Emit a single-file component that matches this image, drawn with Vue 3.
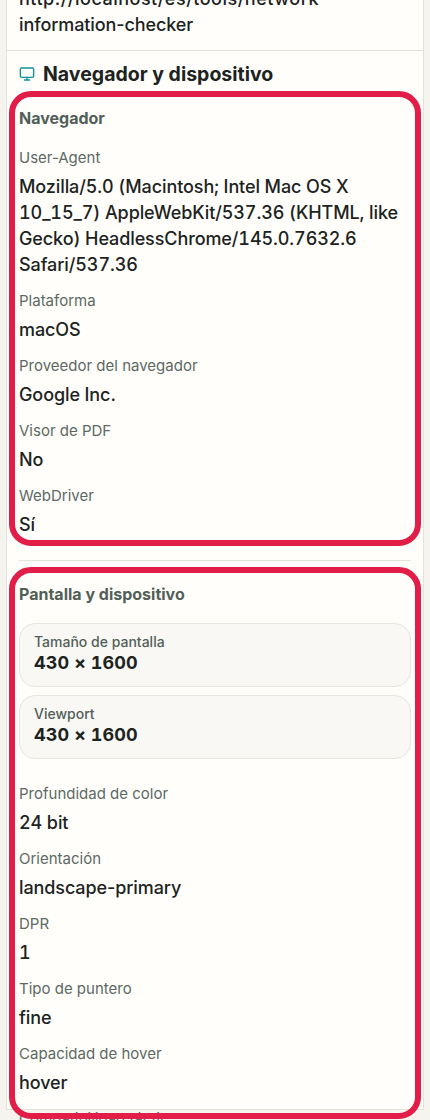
<script setup>
const browserRows = [
  { label: 'User-Agent', value: 'Mozilla/5.0 (Macintosh; Intel Mac OS X 10_15_7) AppleWebKit/537.36 (KHTML, like Gecko) HeadlessChrome/145.0.7632.6 Safari/537.36', numeric: true },
  { label: 'Plataforma', value: 'macOS' },
  { label: 'Proveedor del navegador', value: 'Google Inc.' },
  { label: 'Visor de PDF', value: 'No' },
  { label: 'WebDriver', value: 'Sí' },
]

const screenStats = [
  { label: 'Tamaño de pantalla', value: '430 × 1600' },
  { label: 'Viewport', value: '430 × 1600' },
]

const deviceRows = [
  { label: 'Profundidad de color', value: '24 bit', numeric: true },
  { label: 'Orientación', value: 'landscape-primary' },
  { label: 'DPR', value: '1', numeric: true },
  { label: 'Tipo de puntero', value: 'fine' },
  { label: 'Capacidad de hover', value: 'hover' },
  { label: 'Compatibilidad táctil', value: 'No' },
]
</script>

<template>
  <div class="page">
    <main class="card">
      <div class="url-block">
        <p class="value url"><span class="url-path">http://localhost/es/tools/network-</span>information-checker</p>
      </div>

      <section class="panel">
        <h2 class="panel-title">
          <svg class="panel-icon" viewBox="0 0 24 24" fill="none" stroke="currentColor" stroke-width="2" stroke-linecap="round" stroke-linejoin="round">
            <rect x="2" y="3" width="20" height="14" rx="2" />
            <path d="M8 21h8M12 17v4" />
          </svg>
          Navegador y dispositivo
        </h2>

        <div class="group browser-group">
          <h3 class="group-title">Navegador</h3>
          <div v-for="row in browserRows" :key="row.label" class="row">
            <div class="label">{{ row.label }}</div>
            <div class="value" :class="{ numeric: row.numeric }">{{ row.value }}</div>
          </div>
        </div>

        <hr class="divider">

        <div class="group device-group">
          <h3 class="group-title">Pantalla y dispositivo</h3>
          <div class="stats">
            <div v-for="stat in screenStats" :key="stat.label" class="stat">
              <div class="stat-label">{{ stat.label }}</div>
              <div class="stat-value">{{ stat.value }}</div>
            </div>
          </div>
          <div v-for="row in deviceRows" :key="row.label" class="row">
            <div class="label">{{ row.label }}</div>
            <div class="value" :class="{ numeric: row.numeric }">{{ row.value }}</div>
          </div>
        </div>
      </section>
    </main>
  </div>
</template>

<style>
html,
body {
  height: 1120px;
  overflow: hidden;
  background: #f5f4ef;
}
</style>

<style scoped>
.page {
  height: 1120px;
  overflow: hidden;
  padding: 0 6px;
  box-sizing: border-box;
  font-family: Inter, "Liberation Sans", sans-serif;
}

.card {
  margin-top: -14px;
  background: #fffefb;
  border: 1px solid #e4e3da;
  border-top: 0;
}

.url-block {
  padding: 0 12px 12px;
  border-bottom: 1px solid #e4e3da;
}

.url {
  letter-spacing: 0;
}

.url-path {
  letter-spacing: 0.5px;
}

.panel {
  padding: 11px 12px 0;
}

.panel-title {
  display: flex;
  align-items: center;
  gap: 8px;
  margin: 0 0 15px;
  font-size: 19.5px;
  line-height: 24px;
  font-weight: 700;
  color: #1c2321;
}

.panel-icon {
  width: 16px;
  height: 16px;
  color: #0f949b;
  flex-shrink: 0;
}

.group {
  box-sizing: border-box;
  padding-top: 6px;
  border-radius: 12px;
  outline: 6px solid #e11d48;
  outline-offset: 4px;
}

.browser-group {
  height: 435px;
}

.device-group {
  height: 532px;
}

.group-title {
  margin: 0 0 18px;
  font-size: 16px;
  line-height: 22px;
  font-weight: 700;
  color: #525f58;
}

.row {
  margin-bottom: 12px;
}

.label {
  margin-bottom: 6px;
  font-size: 15px;
  line-height: 21px;
  color: #5d6963;
}

.value {
  margin: 0;
  font-size: 18px;
  line-height: 26px;
  font-weight: 500;
  letter-spacing: -0.1px;
  color: #1c2321;
}

.numeric {
  font-variant-numeric: tabular-nums;
}

.divider {
  height: 1px;
  margin: 24px 0 16px;
  border: 0;
  background: #e4e3da;
}

.stats {
  display: flex;
  flex-direction: column;
  gap: 8px;
  margin: 3px 0 24px;
}

.stat {
  height: 64px;
  box-sizing: border-box;
  padding: 9px 14px;
  background: #f9f8f5;
  border: 1px solid #e6e5de;
  border-radius: 16px;
}

.stat-label {
  font-size: 14px;
  line-height: 18px;
  font-weight: 500;
  color: #525f58;
}

.stat-value {
  font-size: 18px;
  line-height: 24px;
  font-weight: 700;
  letter-spacing: 0.1px;
  font-variant-numeric: tabular-nums;
  color: #1c2321;
}
</style>
